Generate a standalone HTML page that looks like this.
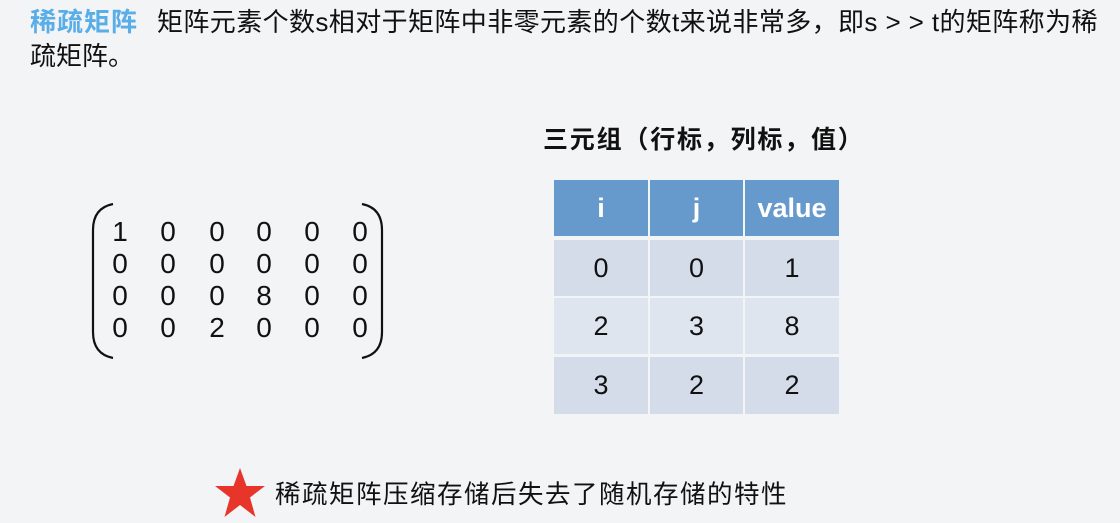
<!DOCTYPE html><html><head><meta charset="utf-8"><style>
body{margin:0;width:1120px;height:523px;background:#f3f4f6;position:relative;overflow:hidden;font-family:"Liberation Sans","Noto Sans CJK SC",sans-serif;color:#111}
.a{position:absolute;white-space:nowrap}
.t{font-size:26px;line-height:32px}
.d{position:absolute;font-size:28px;width:30px;text-align:center;line-height:30px}
.c{position:absolute;display:flex;align-items:center;justify-content:center;font-size:27px}
</style></head><body>
<div class="a t" style="left:30px;top:6px"><b style="color:#5aaee8;letter-spacing:1px">稀疏矩阵</b></div>
<div class="a t" style="left:157px;top:6px;letter-spacing:0.4px">矩阵元素个数s相对于矩阵中非零元素的个数t来说非常多，即s &gt; &gt; t的矩阵称为稀</div>
<div class="a t" style="left:30px;top:40px">疏矩阵。</div>
<div class="a" style="left:543px;top:120px;font-size:25px;font-weight:bold;letter-spacing:1.8px">三元组（行标，列标，值）</div>
<svg class="a" style="left:85px;top:200px" width="305" height="162"><path d="M28 4 Q8 8 8 30 V132 Q8 154 28 158" fill="none" stroke="#111" stroke-width="2.2"/><path d="M277 4 Q297 8 297 30 V132 Q297 154 277 158" fill="none" stroke="#111" stroke-width="2.2"/></svg>
<div id="m"></div>
<script>
var v=[[1,0,0,0,0,0],[0,0,0,0,0,0],[0,0,0,8,0,0],[0,0,2,0,0,0]],xs=[120,168,217,264,312,360],ys=[232,264,296,328],h='';
for(var r=0;r<4;r++)for(var c=0;c<6;c++)h+='<div class="d" style="left:'+(xs[c]-15)+'px;top:'+(ys[r]-15)+'px">'+v[r][c]+'</div>';
var cx=[554,650,745],cw=[94,93,94],ry=[180,240,298,357],rh=[56,56,56,57],t=[['i','j','value'],['0','0','1'],['2','3','8'],['3','2','2']];
for(var r=0;r<4;r++)for(var c=0;c<3;c++){var bg=r==0?'#6699cc':(r==2?'#dfe5ef':'#d4dcea');h+='<div class="c" style="left:'+cx[c]+'px;top:'+ry[r]+'px;width:'+cw[c]+'px;height:'+rh[r]+'px;background:'+bg+(r==0?';color:#fff;font-weight:bold':'')+'">'+t[r][c]+'</div>';}
document.getElementById('m').innerHTML=h;
</script>
<svg class="a" style="left:213px;top:467px" width="54" height="52"><polygon points="27,1 33.5,19 52,19 37,30.5 42.5,50 27,38 11.5,50 17,30.5 2,19 20.5,19" fill="#e8352c"/></svg>
<div class="a" style="left:275px;top:479px;font-size:25.5px;line-height:32px;letter-spacing:1.5px">稀疏矩阵压缩存储后失去了随机存储的特性</div>
</body></html>
